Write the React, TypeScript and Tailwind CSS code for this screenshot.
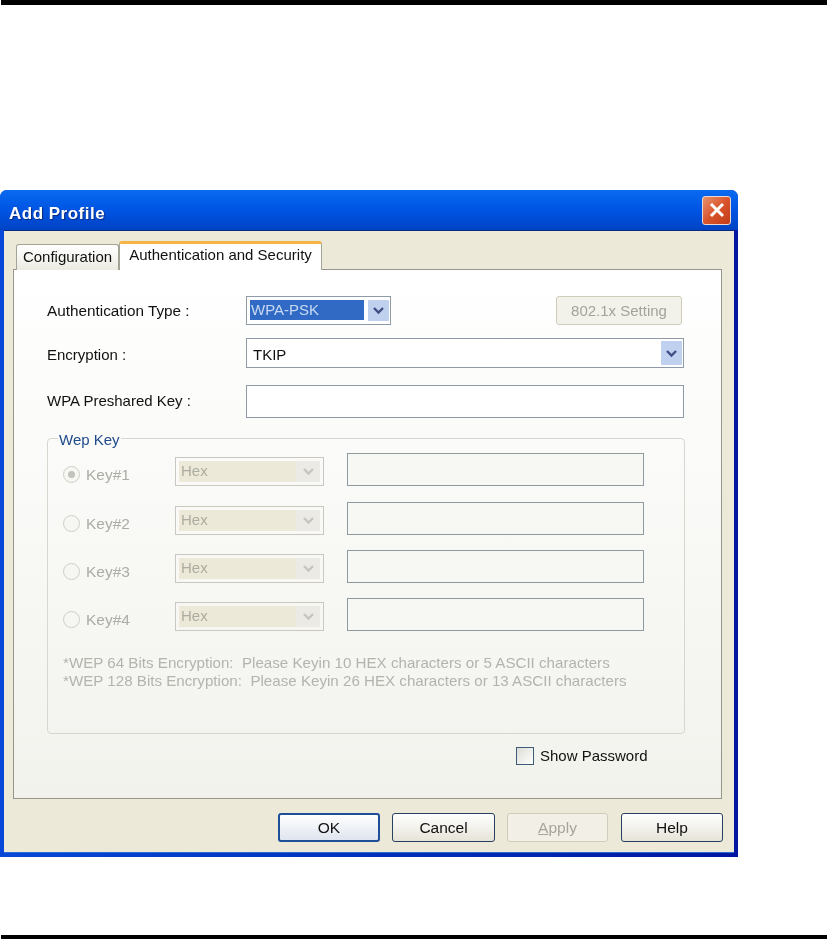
const Chevron = ({ color = '#3f4f86' }: { color?: string }) => (
  <svg width="13" height="9" viewBox="0 0 13 9" fill="none">
    <path d="M2 2 L6.5 6.5 L11 2" stroke={color} strokeWidth="2.4" />
  </svg>
);

function ComboArrow() {
  return (
    <div className="w-[21px] self-stretch my-0.5 mr-px flex items-center justify-center bg-[#c0d0ef] rounded-[1px]">
      <Chevron />
    </div>
  );
}

function KeyRow({ label, checked }: { label: string; checked?: boolean }) {
  return (
    <div className={`flex h-[33px] pl-[15px] ${checked ? 'mb-px' : ''}`}>
      <div className="mt-[13px] flex items-center h-[17px] w-[112px]">
        <div className="w-[17px] h-[17px] rounded-full border border-[#cfcec6] bg-[#f6f6f2] flex items-center justify-center">
          {checked && <div className="w-[7px] h-[7px] rounded-full bg-[#c4c3bb]" />}
        </div>
        <span className="ml-[6px] text-[#acaca6] text-[15.5px]">{label}</span>
      </div>
      <div className="self-end w-[149px] h-[29px] border border-[#c8c8c0] p-[3px] flex items-center">
        <div className="flex-1 h-full bg-[#ece9d8] text-[#acaca0] text-[15px] leading-[20px] pl-[2px]">Hex</div>
        <div className="w-[24px] h-full bg-[#ebeae4] flex items-center justify-center">
          <Chevron color="#c6c6c0" />
        </div>
      </div>
      <div className="ml-[23px] w-[297px] h-[33px] border border-[#8f9aa0] bg-[#f7f7f3]" />
    </div>
  );
}

function FooterButton({ children, tone = 'normal', size = 'w-[102px]' }: { children: React.ReactNode; tone?: 'normal' | 'default' | 'off'; size?: string }) {
  const look = {
    normal: 'border-[#27405f] bg-gradient-to-b from-white to-[#e6e4d8] text-[#111]',
    default: 'border-[#1f4f96] border-2 bg-gradient-to-b from-white to-[#dfe5ee] text-[#111]',
    off: 'border-[#cfccbc] bg-[#f2f0e6] text-[#a6a59b]',
  }[tone];
  return (
    <button className={`${size} h-[29px] rounded-[3px] border ${look} text-[15.5px] flex items-center justify-center`}>
      {children}
    </button>
  );
}

export default function App() {
  return (
    <div className="w-[827px] h-[939px] bg-white flex flex-col font-['Liberation_Sans',sans-serif] overflow-hidden">
      <div className="h-[5px] ml-px bg-black" />

      {/* XP style dialog */}
      <div className="mt-[185px] w-[738px] h-[667px] flex flex-col rounded-t-[7px] overflow-hidden bg-gradient-to-r from-[#0848d8] to-[#0016a0] blur-[0.4px]">
        <div className="h-[40px] shrink-0 flex items-center justify-between pl-[9px] pr-[7px] bg-gradient-to-b from-[#0a6af0] via-[#0054e3] to-[#0043c4]">
          <span className="pt-[7px] text-white font-bold text-[17px] tracking-[0.5px] [text-shadow:1px_1px_1px_#0a2a80]">Add Profile</span>
          <div className="w-[29px] h-[29px] rounded-[3px] border border-[#e8d8d0] bg-gradient-to-br from-[#e8906c] via-[#d9542b] to-[#c23c18] flex items-center justify-center">
            <svg width="18" height="18" viewBox="0 0 18 18" fill="none">
              <path d="M3 3 L15 15 M15 3 L3 15" stroke="#fff" strokeWidth="3" />
            </svg>
          </div>
        </div>

        <div className="flex-1 mx-1 mb-1 bg-[#ece9d8] flex flex-col border-t border-b border-t-[#0a2a80] border-b-[#2a6ad0]">
          {/* Tabs */}
          <div className="flex items-end h-[29px] mt-[10px] pl-3 -mb-px relative z-10">
            <div className="w-[103px] h-[26px] border border-[#a3a396] border-b-0 rounded-t-[3px] bg-gradient-to-b from-white to-[#ecebe2] text-[#111] text-[15px] flex items-center justify-center">
              Configuration
            </div>
            <div className="w-[203px] h-[29px] border-x border-[#a3a396] border-t-[3px] border-t-[#f5b445] rounded-t-[3px] bg-white text-[#111] text-[15px] flex items-start justify-center">
              Authentication and Security
            </div>
          </div>

          {/* Panel */}
          <div className="ml-[9px] w-[709px] h-[530px] border border-[#97968a] bg-gradient-to-b from-white to-[#f2f2ed] pt-[25px] pl-[33px]">
            <div className="w-[637px] flex flex-col text-[#111] text-[15px]">
              <div className="flex items-center h-[30px]">
                <span className="w-[199px] pt-[3px] text-[15.3px]">Authentication Type :</span>
                <div className="w-[145px] h-[29px] border border-[#8e9aa6] bg-white flex items-center p-[3px] pr-0">
                  <div className="w-[114px] h-[20px] bg-[#316ac5] text-[#c8d9f3] leading-[19px] pl-[1px]">WPA-PSK</div>
                  <div className="ml-auto self-stretch flex -my-[2px]"><ComboArrow /></div>
                </div>
                <button className="ml-auto mr-[2px] w-[126px] h-[29px] pt-[2px] rounded-[3px] border border-[#cfccbc] bg-[#f3f2ea] text-[#a3a39a]">
                  802.1x Setting
                </button>
              </div>

              <div className="mt-[13px] flex items-center h-[30px]">
                <span className="w-[199px] pt-[5px]">Encryption :</span>
                <div className="flex-1 h-[30px] border border-[#8e9aa6] bg-white flex items-center justify-between pl-[6px]">
                  <span className="pt-[5px]">TKIP</span>
                  <ComboArrow />
                </div>
              </div>

              <div className="mt-[17px] flex items-center h-[33px]">
                <span className="w-[199px]">WPA Preshared Key :</span>
                <div className="flex-1 h-[33px] border border-[#8e9aa6] bg-white" />
              </div>

              {/* Wep Key group */}
              <div className="relative mt-[20px] w-[638px] h-[296px] border border-[#d8d7cf] rounded-[4px] pt-[14px] flex flex-col gap-[15px]">
                <span className="absolute -top-[8px] left-[10px] px-[1px] bg-[#fafaf8] text-[#1f4a8c] leading-[18px]">Wep Key</span>
                <KeyRow label="Key#1" checked />
                <KeyRow label="Key#2" />
                <KeyRow label="Key#3" />
                <KeyRow label="Key#4" />
                <div className="mt-2 pl-[15px] text-[#b4b4ae] text-[15.15px] leading-[18px] whitespace-pre">
                  <div>*WEP 64 Bits Encryption:  Please Keyin 10 HEX characters or 5 ASCII characters</div>
                  <div>*WEP 128 Bits Encryption:  Please Keyin 26 HEX characters or 13 ASCII characters</div>
                </div>
              </div>

              <div className="mt-[12px] ml-[469px] flex items-center h-[20px]">
                <div className="w-[18px] h-[18px] border border-[#3f5a78] bg-gradient-to-br from-[#dcdcd6] to-white" />
                <span className="ml-[6px] text-[15px] pt-px">Show Password</span>
              </div>
            </div>
          </div>

          {/* Footer buttons */}
          <div className="mt-[14px] pl-[274px] flex gap-[12px]">
            <FooterButton tone="default">OK</FooterButton>
            <FooterButton size="w-[103px]">Cancel</FooterButton>
            <FooterButton tone="off" size="w-[101px]"><span><u>A</u>pply</span></FooterButton>
            <div className="ml-px"><FooterButton>Help</FooterButton></div>
          </div>
        </div>
      </div>

      <div className="mt-auto h-[4px] ml-px bg-black" />
    </div>
  );
}
